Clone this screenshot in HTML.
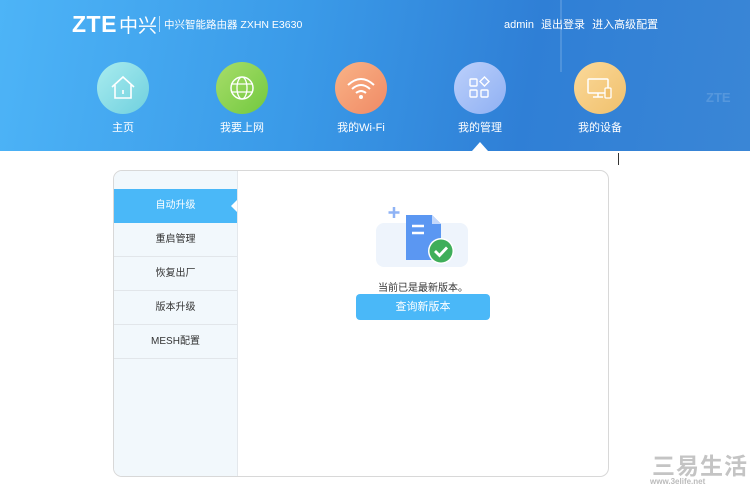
<!DOCTYPE html>
<html><head><meta charset="utf-8"><style>
*{margin:0;padding:0;box-sizing:border-box}
body{width:750px;height:487px;overflow:hidden;background:#fff;font-family:"Liberation Sans","Noto Sans CJK SC",sans-serif;position:relative}
.hdr{position:absolute;left:0;top:0;width:750px;height:151px;background:linear-gradient(100deg,#4db4f7 0%,#3a9ae8 40%,#2f7fd6 70%,#3a86d6 100%);overflow:hidden}
.abs{position:absolute}
.logo{left:72px;top:11px;color:#fff;white-space:nowrap;line-height:26px}
.sep{left:159px;top:16px;width:1px;height:16px;background:rgba(255,255,255,.6)}
.title{left:164px;top:17px;color:#fff;font-size:10.5px;white-space:nowrap}
.top{left:504px;top:16px;color:#fff;font-size:11px;word-spacing:4px;white-space:nowrap}
.c{position:absolute;width:52px;height:52px;border-radius:50%;top:62px}
.lbl{position:absolute;top:119px;width:100px;text-align:center;color:#fff;font-size:11px}
.card{left:113px;top:170px;width:496px;height:307px;border:1px solid #d8d8d8;border-radius:9px;overflow:hidden}
.side{position:absolute;left:0;top:0;width:124px;height:100%;background:#f2f8fc;border-right:1px solid #e4e8ec}
.it{position:absolute;left:0;width:123px;height:34px;line-height:34px;text-align:center;font-size:10px;color:#333;border-bottom:1px solid #e2e6ea}
.btn{left:356px;top:294px;width:134px;height:26px;border-radius:4px;background:#4ab8f8;color:#fff;font-size:11px;text-align:center;line-height:26px}
</style></head><body>
<div class="hdr">
<div class="abs" style="left:560px;top:0;width:2px;height:72px;background:rgba(255,255,255,.15)"></div>
<div class="abs logo"><span style="font-size:23px;font-weight:bold;letter-spacing:0.5px">ZTE</span><span style="font-size:19px;margin-left:2px">中兴</span></div>
<div class="abs sep"></div>
<div class="abs title">中兴智能路由器 ZXHN E3630</div>
<div class="abs top">admin 退出登录 进入高级配置</div>
<div class="abs" style="left:706px;top:90px;color:rgba(255,255,255,.15);font-size:13px;font-weight:bold">ZTE</div>

<div class="c" style="left:97px;background:linear-gradient(135deg,#a9ecef,#6fd0de)"><svg width="52" height="52"><path d="M15 25 L26 15 L37 25 M18 23 V36 H34 V23 M26 28 V32" fill="none" stroke="#fff" stroke-width="1.6"/></svg></div>
<div class="lbl" style="left:73px">主页</div>
<div class="c" style="left:216px;background:linear-gradient(135deg,#a8dd6a,#72c93f)"><svg width="52" height="52"><circle cx="26" cy="26" r="11" fill="none" stroke="#fff" stroke-width="1.5"/><ellipse cx="26" cy="26" rx="5" ry="11" fill="none" stroke="#fff" stroke-width="1.3"/><path d="M15 22 H37 M15 30 H37" stroke="#fff" stroke-width="1.3"/></svg></div>
<div class="lbl" style="left:192px">我要上网</div>
<div class="c" style="left:335px;background:linear-gradient(135deg,#f9b387,#f08a65)"><svg width="52" height="52"><path d="M13 23 Q26 11 39 23 M17 27 Q26 19 35 27 M21 31 Q26 27 31 31" fill="none" stroke="#fff" stroke-width="2"/><circle cx="26" cy="35" r="2" fill="#fff"/></svg></div>
<div class="lbl" style="left:311px">我的Wi-Fi</div>
<div class="c" style="left:454px;background:linear-gradient(135deg,#bcd0fb,#8fb0f3)"><svg width="52" height="52"><rect x="16" y="17" width="7" height="7" rx="1" fill="none" stroke="#fff" stroke-width="1.4"/><rect x="16" y="28" width="7" height="7" rx="1" fill="none" stroke="#fff" stroke-width="1.4"/><rect x="27" y="28" width="7" height="7" rx="1" fill="none" stroke="#fff" stroke-width="1.4"/><path d="M30.5 15 L35 19.5 L30.5 24 L26 19.5Z" fill="none" stroke="#fff" stroke-width="1.4"/></svg></div>
<div class="lbl" style="left:430px">我的管理</div>
<div class="c" style="left:574px;background:linear-gradient(135deg,#fbd99a,#f0c06c)"><svg width="52" height="52"><rect x="14" y="17" width="20" height="14" rx="1" fill="none" stroke="#fff" stroke-width="1.5"/><path d="M24 31 V35 M19 35 H29" stroke="#fff" stroke-width="1.5"/><rect x="31" y="26" width="6" height="10" rx="1" fill="#f0c06c" stroke="#fff" stroke-width="1.3"/></svg></div>
<div class="lbl" style="left:550px">我的设备</div>
<div class="abs" style="left:472px;top:142px;width:0;height:0;border-left:8px solid transparent;border-right:8px solid transparent;border-bottom:9px solid #fff"></div>
</div>
<div class="abs" style="left:618px;top:153px;width:1px;height:12px;background:#333"></div>

<div class="abs card">
<div class="side">
<div class="it" style="top:18px;background:#4ab8f8;color:#fff;border:none">自动升级</div>
<div class="abs" style="left:117px;top:29px;width:0;height:0;border-top:6px solid transparent;border-bottom:6px solid transparent;border-right:6px solid #fff"></div>
<div class="it" style="top:52px">重启管理</div>
<div class="it" style="top:86px">恢复出厂</div>
<div class="it" style="top:120px">版本升级</div>
<div class="it" style="top:154px">MESH配置</div>
</div>
</div>
<svg class="abs" style="left:376px;top:206px" width="96" height="64">
<rect x="0" y="17" width="92" height="44" rx="8" fill="#eef4fc"/>
<path d="M18 1 V12 M12.5 6.5 H23.5" stroke="#8fb3f5" stroke-width="2.5"/>
<path d="M30 9 H56 L65 18 V54 H30Z" fill="#5b97f2"/>
<path d="M56 9 V18 H65Z" fill="#c4d8fb"/>
<path d="M36 20 H48 M36 27 H48" stroke="#fff" stroke-width="2.5"/>
<circle cx="65" cy="45" r="13" fill="#fff"/><circle cx="65" cy="45" r="11.5" fill="#3fae5a"/>
<path d="M59 45 L63.5 49.5 L71 41.5" fill="none" stroke="#fff" stroke-width="2.8"/>
</svg>
<div class="abs" style="left:378px;top:279px;font-size:10px;color:#333">当前已是最新版本。</div>
<div class="abs btn">查询新版本</div>
<div class="abs" style="left:652px;top:454px;font-size:23px;color:#c4c4c4;letter-spacing:1px;line-height:24px;font-weight:bold">三易生活</div>
<div class="abs" style="left:650px;top:477px;font-size:8px;color:#bbb;font-weight:bold">www.3elife.net</div>
</body></html>
